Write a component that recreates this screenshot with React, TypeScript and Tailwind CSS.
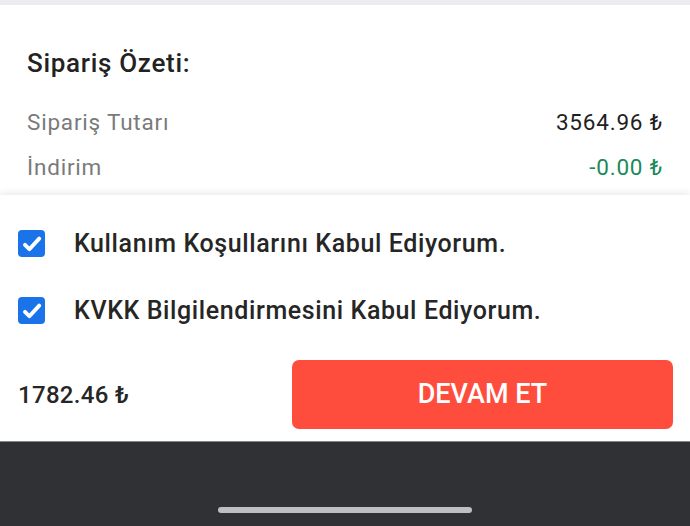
import React from 'react';

const font = { fontFamily: 'Roboto, "Noto Sans", sans-serif' };

function CheckBox() {
  return (
    <span className="flex h-[27px] w-[27px] shrink-0 items-center justify-center rounded-[4px] bg-[#1a73e8]">
      <svg viewBox="0 0 24 24" className="h-[24px] w-[24px]" fill="none">
        <path d="M5 12.8l4.4 4.4L19.2 6.6" stroke="#fff" strokeWidth="3.9" strokeLinecap="round" strokeLinejoin="round" />
      </svg>
    </span>
  );
}

function Row({ label, value, valueClass }: { label: string; value: string; valueClass: string }) {
  return (
    <div className="flex h-[45px] items-center justify-between text-[22.5px] leading-[45px] tracking-[0.8px]">
      <span className="text-[#7a7a7a]">{label}</span>
      <span className={valueClass}>{value}</span>
    </div>
  );
}

export default function App() {
  const terms = ['Kullanım Koşullarını Kabul Ediyorum.', 'KVKK Bilgilendirmesini Kabul Ediyorum.'];

  return (
    <div className="flex h-[526px] w-[690px] flex-col overflow-hidden bg-[#ececf1]" style={font}>
      {/* Order summary card */}
      <div className="mt-[5px] bg-white px-[27px] pb-[5px] pt-[43px]">
        <h2 className="text-[26px] font-medium leading-[30px] tracking-[0.7px] text-[#222]">Sipariş Özeti:</h2>
        <div className="mt-[22px]">
          <Row label="Sipariş Tutarı" value="3564.96 ₺" valueClass="text-[#1f1f1f]" />
          <Row label="İndirim" value="-0.00 ₺" valueClass="text-[#1b8a5a]" />
        </div>
      </div>

      {/* Terms + checkout */}
      <div className="relative z-10 flex-1 bg-white pt-[15px] shadow-[0_-3px_6px_rgba(0,0,0,0.07)]">
        {terms.map((t) => (
          <div key={t} className="flex h-[67px] items-center gap-[29px] px-[18px]">
            <CheckBox />
            <span className="text-[25px] font-medium tracking-[0.6px] text-[#262626]">{t}</span>
          </div>
        ))}
        <div className="flex items-center justify-between pb-[11px] pl-[18px] pr-[17px] pt-[16px]">
          <span className="text-[24px] font-medium tracking-[0.3px] text-[#262626]">1782.46 ₺</span>
          <button className="flex h-[69px] w-[381px] items-center justify-center rounded-[7px] bg-[#ff4d3d] text-[27px] font-medium text-white">
            DEVAM ET
          </button>
        </div>
      </div>

      {/* System nav bar */}
      <div className="flex h-[85px] shrink-0 flex-col items-center justify-end border-t border-[#8a8a8c] bg-[#303134] pb-[13px]">
        <div className="h-[6px] w-[254px] rounded-full bg-[#bebfc2]" />
      </div>
    </div>
  );
}
